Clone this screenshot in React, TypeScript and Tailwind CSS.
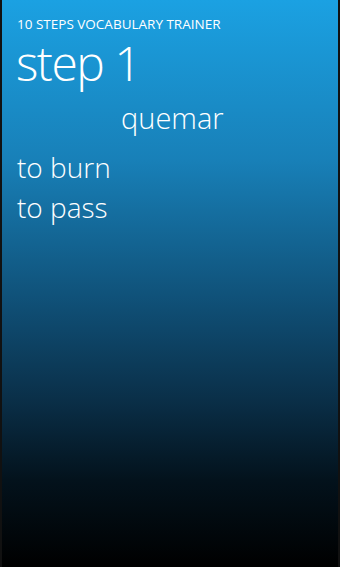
export default function App() {
  return (
    <div
      className="w-[340px] h-[567px] overflow-hidden border-x-2 border-[#111] bg-[linear-gradient(to_bottom,#1ba1e2_0px,#1880b8_160px,#0f4d73_310px,#0a2f48_400px,#03121c_480px,#000_567px)] text-white"
      style={{ fontFamily: '"Open Sans", "Noto Sans", sans-serif' }}
    >
      <div className="pl-[15px] pt-[15px]">
        <div className="text-[13.5px] leading-[18px]">10 STEPS VOCABULARY TRAINER</div>
        <div className="text-[48px] leading-[58px] font-light tracking-[-1.5px] -ml-[1px] mt-[1px]">step 1</div>
        <div className="text-[29px] leading-[36px] font-light pl-[104px] mt-[8px]">quemar</div>
        <div className="mt-[11px] text-[28px] leading-[40px] font-light">
          <div>to burn</div>
          <div>to pass</div>
        </div>
      </div>
    </div>
  );
}
